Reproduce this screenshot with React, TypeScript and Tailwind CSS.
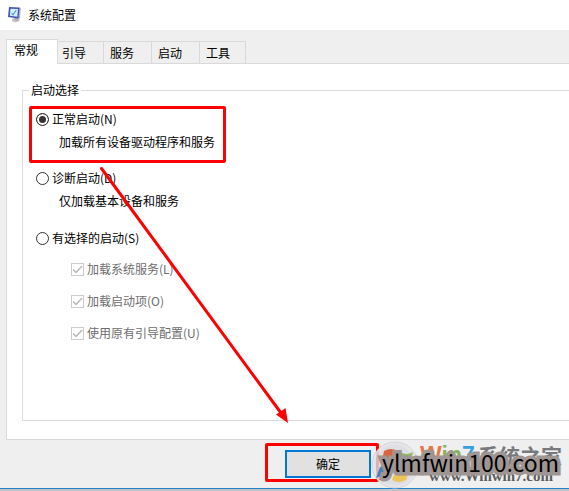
import clsx from "clsx";

interface CheckItem {
  id: string;
  label: string;
}

const tabs = ["常规", "引导", "服务", "启动", "工具"];

const checks: CheckItem[] = [
  { id: "services", label: "加载系统服务(L)" },
  { id: "startup", label: "加载启动项(O)" },
  { id: "boot", label: "使用原有引导配置(U)" },
];

function AppIcon() {
  return (
    <svg className="h-4 w-4" viewBox="0 0 16 16">
      <path d="M5 12 L8 10.500 L13 12.500 L12 14.500 L8 15.500 L5 14 Z" fill="#c9c7c4" />
      <path d="M7 10 L11 10 L11 13.500 L8 13.500 Z" fill="#aaa8a8" />
      <path d="M12 0.500 L13.800 1 L13 11.500 L11 12 Z" fill="#aeb0ba" />
      <path d="M2 0 L12.500 0.500 L11.500 11.500 L1 10 Z" fill="#4353b4" />
      <path d="M3.500 1.700 L11 2 L10.300 9.700 L2.800 8.800 Z" fill="#d5efff" />
      <path d="M4.500 6 L6 7.800 L9.300 3" fill="none" stroke="#4a94dd" strokeWidth="1.100" />
    </svg>
  );
}

function StartOption({ id, label, checked }: { id: string; label: string; checked?: boolean }) {
  return (
    <div className="flex h-5 items-center gap-[3px]">
      <input
        type="radio"
        name="startup-mode"
        id={id}
        defaultChecked={checked}
        className="h-[13px] w-[13px] appearance-none rounded-full border border-[#333333] bg-white checked:bg-[#333333] checked:shadow-[inset_0_0_0_2px_#ffffff]"
      />
      <label htmlFor={id}>{label}</label>
    </div>
  );
}

function CheckOption({ id, label }: CheckItem) {
  return (
    <div className="flex h-5 items-center gap-[3px] text-[#6d6d6d]">
      <span className="relative flex">
        <input
          type="checkbox"
          id={id}
          defaultChecked
          disabled
          className="h-[13px] w-[13px] appearance-none border border-[#cccccc] bg-white"
        />
        <svg className="pointer-events-none absolute inset-0 h-[13px] w-[13px]" viewBox="0 0 13 13">
          <path d="M2 6.500 L5 9.500 L11 3" fill="none" stroke="#b5b5b5" strokeWidth="1.400" />
        </svg>
      </span>
      <label htmlFor={id}>{label}</label>
    </div>
  );
}

function Watermark() {
  return (
    <div className="pointer-events-none absolute right-0 bottom-0 h-[50px] w-[200px] whitespace-nowrap">
      <svg className="absolute top-0 left-0 h-[50px] w-[56px]" viewBox="0 0 56 50">
        <defs>
          <radialGradient id="orb">
            <stop offset="0" stopColor="#ffffff" stopOpacity="0.900" />
            <stop offset="0.800" stopColor="#d5dae0" stopOpacity="0.800" />
            <stop offset="1" stopColor="#f0e8ea" stopOpacity="0.900" />
          </radialGradient>
        </defs>
        <ellipse cx="26" cy="24" rx="23" ry="23" fill="url(#orb)" stroke="#cfd3d8" />
        <path d="M15 10 Q22 6 29 10 L26 23 Q19 20 12 24 Z" fill="#d9653f" />
        <path d="M31 11 Q38 15 44 11 L41 24 Q34 28 28 24 Z" fill="#8cb860" />
        <path d="M11 26 Q19 22 25 26 L21 38 Q14 33 7 37 Z" fill="#3f80c6" />
        <path d="M27 27 Q34 31 41 27 L37 39 Q30 43 23 39 Z" fill="#edc35a" />
      </svg>
      <div className="absolute top-0 left-[51px] font-['Liberation_Sans'] text-[23px] leading-[28px] font-bold">
        <span className="text-[#e07a4b]">W</span>
        <span className="text-[#86b45c]">in</span>
        <span className="text-[#3a9fdc]">7</span>
      </div>
      <div className="absolute top-0 right-[7px] text-[21px] leading-[28px] font-bold text-[#77797d]">系统之家</div>
      <div className="absolute top-[26px] right-[16px] font-['Liberation_Serif'] text-[15px] leading-[18px] font-bold text-[#5c5c5c]">
        www.Winwin7.com
      </div>
      <div className="absolute top-[3px] right-[10px] font-['Noto_Sans_CJK_SC',sans-serif] text-[23px] leading-[36px] text-black [-webkit-text-stroke:7px_#9f9694] [paint-order:stroke_fill]">
        ylmfwin100.com
      </div>
    </div>
  );
}

export default function App() {
  return (
    <div className="relative flex min-h-screen flex-col overflow-hidden bg-[#efefef] font-['Noto_Sans_CJK_SC',sans-serif] text-[12px] leading-5 text-black">
      {/* Title bar */}
      <header className="flex h-[30px] items-center gap-[5px] bg-white pl-[7px]">
        <AppIcon />
        <h1>系统配置</h1>
      </header>

      {/* Tabs */}
      <div role="tablist" className="mt-[9px] flex items-end pl-[6px]">
        {tabs.map((tab, index) => (
          <button
            key={tab}
            type="button"
            role="tab"
            aria-selected={index === 0}
            className={clsx(
              "border-t border-r border-[#d9d9d9] text-left",
              index === 0 && "relative -mb-px h-[25px] w-[52px] border-l bg-white pb-1 pl-[7px]",
              index === 1 && "h-[22px] w-[46px] pl-1",
              index > 1 && "h-[22px] w-12 pl-[6px]",
              index === tabs.length - 1 && "max-w-[46px]"
            )}
          >
            {tab}
          </button>
        ))}
      </div>

      {/* General page */}
      <main className="ml-[6px] flex flex-1 flex-col border-y border-l border-[#d9d9d9] bg-white pt-4 pb-[18px] pl-[15px]">
        <fieldset className="flex-1 border-y border-l border-[#dcdcdc] pl-[13px]">
          <legend className="-ml-[7px] px-[2px]">启动选择</legend>
          <div className="relative mt-[9px]">
            <StartOption id="normal" label="正常启动(N)" checked />
            <p className="mt-[3px] pl-[23px]">加载所有设备驱动程序和服务</p>
            <div className="pointer-events-none absolute -top-[3px] -left-[7px] h-[57px] w-[197px] rounded-[2px] border-[3px] border-[#ff0000]" />
          </div>
          <div className="mt-4">
            <StartOption id="diagnostic" label="诊断启动(D)" />
            <p className="mt-[3px] pl-[23px]">仅加载基本设备和服务</p>
          </div>
          <div className="mt-[17px]">
            <StartOption id="selective" label="有选择的启动(S)" />
            <div className="mt-[11px] flex flex-col gap-3 pl-[35px]">
              {checks.map((item) => (
                <CheckOption key={item.id} {...item} />
              ))}
            </div>
          </div>
        </fieldset>
      </main>

      {/* Footer */}
      <footer className="flex justify-end pt-[3px] pr-[190px] pb-[6px]">
        <div className="flex rounded-[2px] border-[3px] border-[#ff0000] pt-1 pr-[5px] pb-px pl-[17px]">
          <button type="button" className="h-7 w-[86px] border-2 border-[#0078d7] bg-[#e1e1e1] leading-6">
            确定
          </button>
        </div>
      </footer>
      <div className="h-[3px] border-t border-[#1883d7] bg-[#c4c4c4]" />

      {/* Arrow from the selected option to the confirm button */}
      <svg className="pointer-events-none absolute top-[165px] left-[98px] h-[260px] w-[192px]" viewBox="0 0 192 260">
        <path d="M3.500 3.500 L183 248" stroke="#ff0000" strokeWidth="3" strokeLinecap="round" />
        <path d="M190 258 L178 249.500 L182 247 L187.500 243 Z" fill="#ff0000" />
      </svg>

      <Watermark />
    </div>
  );
}
